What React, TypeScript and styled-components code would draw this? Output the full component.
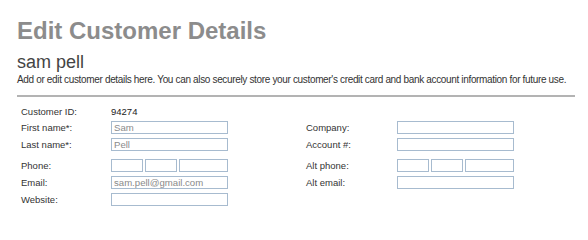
import React from 'react';
import styled, { createGlobalStyle } from 'styled-components';

const GlobalStyle = createGlobalStyle`
  html, body {
    margin: 0;
    padding: 0;
    background: #ffffff;
  }
  body {
    font-family: 'Liberation Sans', Arial, Helvetica, sans-serif;
  }
`;

const SCPage = styled.div`
  width: 588px;
  padding: 17px 13px 0 17px;
  box-sizing: border-box;
`;

const SCTitle = styled.h1`
  margin: 0;
  font-size: 24px;
  line-height: 28px;
  font-weight: 700;
  color: #8c8c8c;
`;

const SCCustomerName = styled.h2`
  margin: 6px 0 0;
  font-size: 18px;
  line-height: 22px;
  font-weight: 400;
  color: #444444;
`;

const SCIntro = styled.p`
  margin: 0;
  font-size: 10px;
  letter-spacing: -0.34px;
  line-height: 14px;
  color: #333333;
  white-space: nowrap;
`;

const SCDivider = styled.hr`
  margin: 8px 0 0;
  border: 0;
  border-top: 2px solid #b3b3b3;
  height: 0;
`;

const SCForm = styled.form`
  padding: 6px 0 0 4px;
`;

const SCRow = styled.div<{ $spaced?: boolean; $height?: number }>`
  display: flex;
  gap: 78px;
  height: ${(p) => p.$height ?? 17}px;
  margin-top: ${(p) => (p.$spaced ? 4 : 0)}px;
`;

const SCField = styled.div<{ $labelWidth?: number }>`
  display: grid;
  grid-template-columns: ${(p) => p.$labelWidth ?? 90}px 117px;
  align-items: center;
`;

const SCLabel = styled.label`
  font-size: 9.5px;
  line-height: 13px;
  color: #333333;
`;

const SCValue = styled.span`
  font-size: 9.5px;
  line-height: 13px;
  color: #222222;
`;

const SCInput = styled.input<{ $width?: number }>`
  box-sizing: border-box;
  width: ${(p) => p.$width ?? 117}px;
  height: 13px;
  margin: 0;
  padding: 0 2px;
  border: 1px solid #a7bbcf;
  border-radius: 0;
  background: #ffffff;
  font-family: 'Liberation Sans', Arial, Helvetica, sans-serif;
  font-size: 9.6px;
  line-height: 11px;
  color: #8a8a8a;
  outline: none;
`;

const SCPhoneGroup = styled.div`
  display: flex;
  gap: 2px;
`;

type FieldProps = { label: string; value?: string; labelWidth?: number };

const TextField = ({ label, value, labelWidth }: FieldProps) => (
  <SCField $labelWidth={labelWidth}>
    <SCLabel>{label}</SCLabel>
    <SCInput type="text" defaultValue={value} />
  </SCField>
);

const PhoneField = ({ label, labelWidth }: FieldProps) => (
  <SCField $labelWidth={labelWidth}>
    <SCLabel>{label}</SCLabel>
    <SCPhoneGroup>
      <SCInput $width={32} />
      <SCInput $width={32} />
      <SCInput $width={49} />
    </SCPhoneGroup>
  </SCField>
);

const App = () => {
  return (
    <>
      <GlobalStyle />
      <SCPage>
        <SCTitle>Edit Customer Details</SCTitle>
        <SCCustomerName>sam pell</SCCustomerName>
        <SCIntro>
          Add or edit customer details here. You can also securely store your customer's credit card and bank
          account information for future use.
        </SCIntro>
        <SCDivider />
        <SCForm onSubmit={(e) => e.preventDefault()}>
          <SCRow $height={16}>
            <SCField>
              <SCLabel>Customer ID:</SCLabel>
              <SCValue>94274</SCValue>
            </SCField>
          </SCRow>
          <SCRow>
            <TextField label="First name*:" value="Sam" />
            <TextField label="Company:" labelWidth={91} />
          </SCRow>
          <SCRow>
            <TextField label="Last name*:" value="Pell" />
            <TextField label="Account #:" labelWidth={91} />
          </SCRow>
          <SCRow $spaced>
            <PhoneField label="Phone:" />
            <PhoneField label="Alt phone:" labelWidth={91} />
          </SCRow>
          <SCRow>
            <TextField label="Email:" value="sam.pell@gmail.com" />
            <TextField label="Alt email:" labelWidth={91} />
          </SCRow>
          <SCRow>
            <TextField label="Website:" />
          </SCRow>
        </SCForm>
      </SCPage>
    </>
  );
};

export default App;
